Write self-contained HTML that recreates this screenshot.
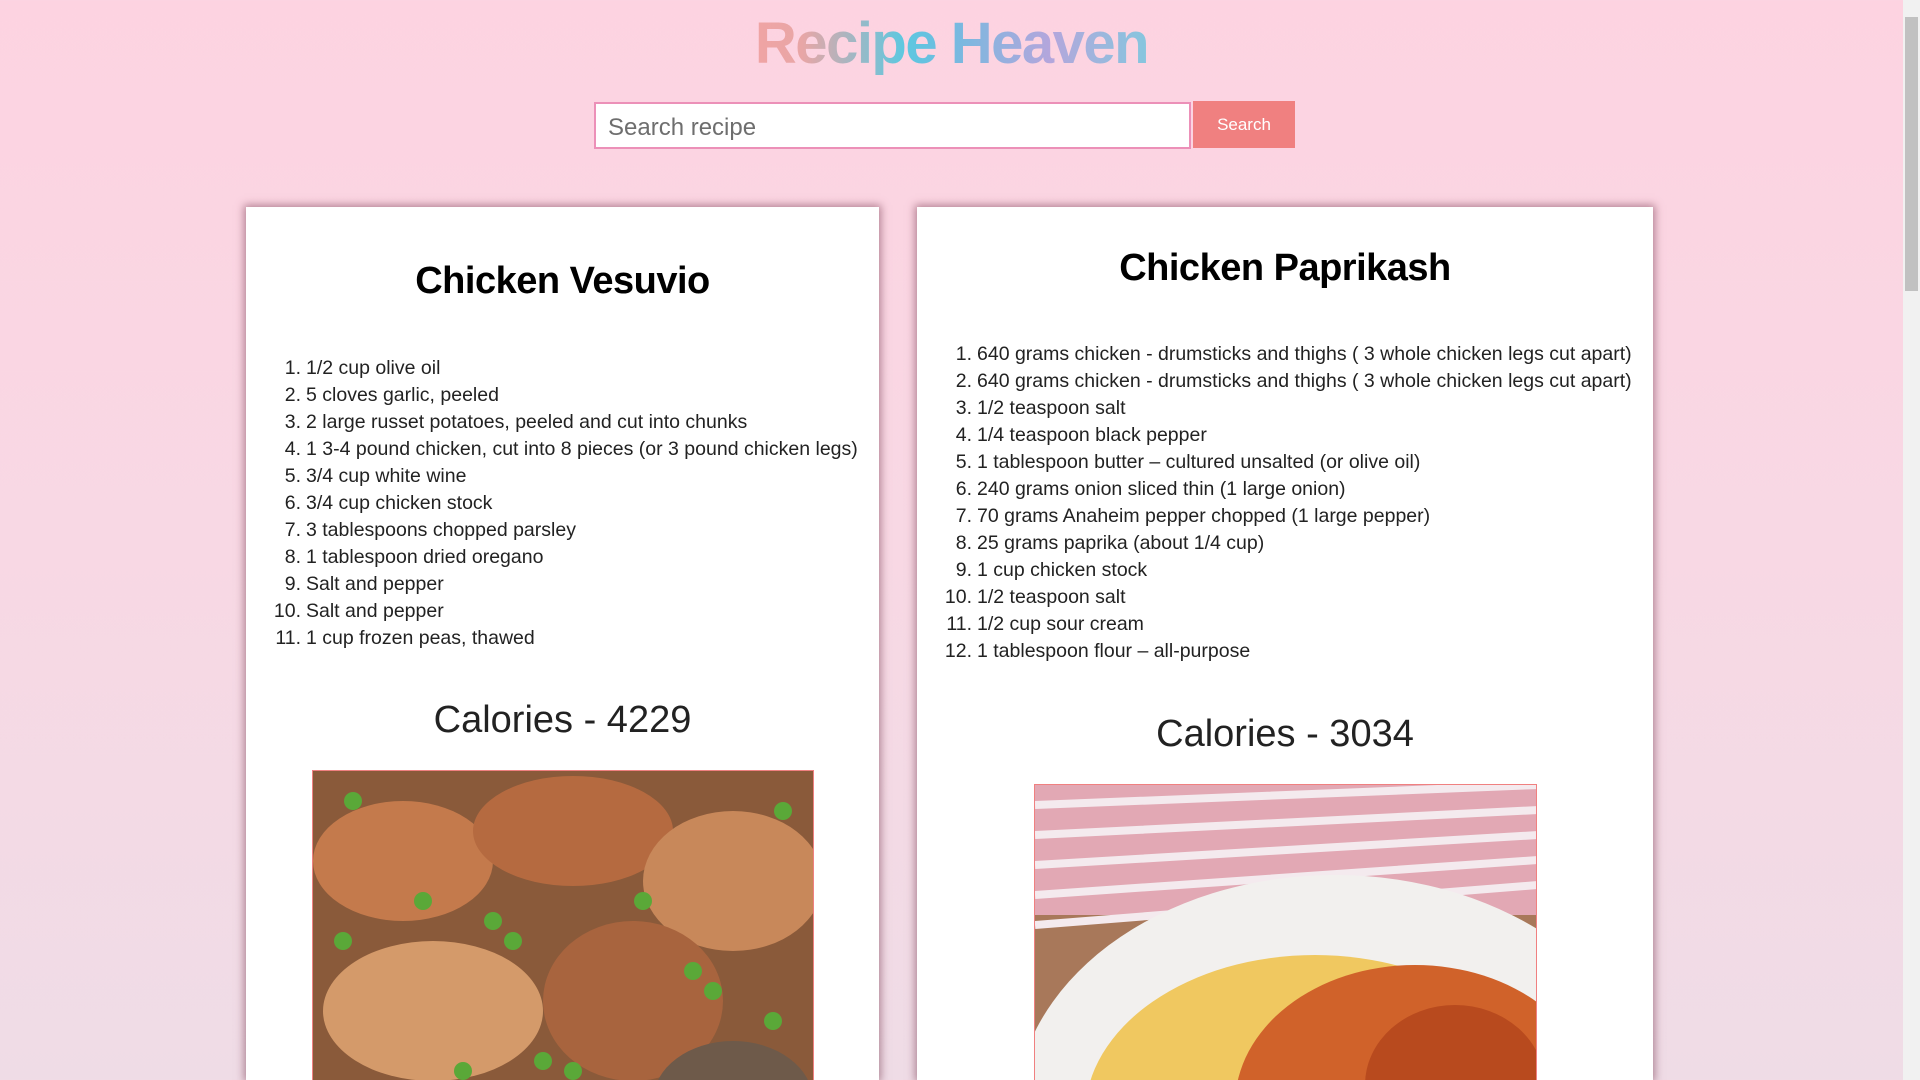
<!DOCTYPE html>
<html><head><meta charset="utf-8"><style>
*{margin:0;padding:0;box-sizing:border-box}
html,body{width:1920px;height:1080px;overflow:hidden}
body{background:linear-gradient(180deg,#fdd3e1 0%,#f8d8e4 50%,#efdce6 100%);font-family:"Liberation Sans",sans-serif;position:relative}
.title{position:absolute;left:0;width:1903px;top:10px;text-align:center;font-size:58px;font-weight:bold;letter-spacing:-1.5px}
.title span{background:linear-gradient(90deg,#f0a4a4 0%,#e8a6a6 12%,#5cc8e0 38%,#6fbce0 48%,#b4a6dc 75%,#86c6de 100%);-webkit-background-clip:text;background-clip:text;color:transparent}
.input{position:absolute;left:594px;top:102px;width:597px;height:47px;border:2px solid #ec90b8;background:#fff;font-size:24px;color:#6e6e6e;padding:10px 12px}
.btn{position:absolute;left:1193px;top:101px;width:102px;height:47px;background:#f08080;color:#fff;font-size:17px;text-align:center;line-height:47px}
.card{position:absolute;top:207px;height:873px;background:#fff;box-shadow:0 0 8px 2px rgba(120,60,80,.55)}
.card h2{position:absolute;left:0;right:0;text-align:center;font-size:38px;font-weight:bold;color:#000;letter-spacing:-0.5px}
.card ol{position:absolute;font-size:19.5px;line-height:27px;color:#222;padding-left:0;list-style:none}
.card ol li{position:relative;white-space:nowrap}
.card ol li b{position:absolute;font-weight:normal;right:100%;margin-right:5px}
.cal{position:absolute;left:0;right:0;text-align:center;font-size:38px;color:#222;font-weight:normal}
.img{position:absolute;border:1px solid #f08080;overflow:hidden}
.sb{position:absolute;left:1903px;top:0;width:17px;height:1080px;background:#f1f1f1}
.sb div{position:absolute;left:2px;top:17px;width:13px;height:274px;background:#c1c1c1}
</style></head><body>
<div class="title"><span>Recipe Heaven</span></div>
<div class="input">Search recipe</div>
<div class="btn">Search</div>

<div class="card" style="left:246px;width:633px">
<h2 style="top:53px">Chicken Vesuvio</h2>
<ol style="left:60px;top:148px">
<li><b>1.</b>1/2 cup olive oil</li>
<li><b>2.</b>5 cloves garlic, peeled</li>
<li><b>3.</b>2 large russet potatoes, peeled and cut into chunks</li>
<li><b>4.</b>1 3-4 pound chicken, cut into 8 pieces (or 3 pound chicken legs)</li>
<li><b>5.</b>3/4 cup white wine</li>
<li><b>6.</b>3/4 cup chicken stock</li>
<li><b>7.</b>3 tablespoons chopped parsley</li>
<li><b>8.</b>1 tablespoon dried oregano</li>
<li><b>9.</b>Salt and pepper</li>
<li><b>10.</b>Salt and pepper</li>
<li><b>11.</b>1 cup frozen peas, thawed</li>
</ol>
<div class="cal" style="top:492px">Calories - 4229</div>
<div class="img" style="left:66px;top:563px;width:502px;height:320px">
<svg width="502" height="320"><rect width="502" height="320" fill="#8a5a3a"/>
<ellipse cx="90" cy="90" rx="90" ry="60" fill="#c47a4c"/><ellipse cx="260" cy="60" rx="100" ry="55" fill="#b56a40"/><ellipse cx="420" cy="110" rx="90" ry="70" fill="#c8885a"/><ellipse cx="120" cy="240" rx="110" ry="70" fill="#d49a6a"/><ellipse cx="320" cy="230" rx="90" ry="80" fill="#a8643e"/><ellipse cx="420" cy="330" rx="80" ry="60" fill="#6e5a4a"/>
<g fill="#5aa838"><circle cx="40" cy="30" r="9"/><circle cx="180" cy="150" r="9"/><circle cx="200" cy="170" r="9"/><circle cx="230" cy="290" r="9"/><circle cx="260" cy="300" r="9"/><circle cx="380" cy="200" r="9"/><circle cx="400" cy="220" r="9"/><circle cx="470" cy="40" r="9"/><circle cx="30" cy="170" r="9"/><circle cx="150" cy="300" r="9"/><circle cx="330" cy="130" r="9"/><circle cx="460" cy="250" r="9"/><circle cx="110" cy="130" r="9"/></g></svg>
</div>
</div>

<div class="card" style="left:917px;width:736px">
<h2 style="top:40px">Chicken Paprikash</h2>
<ol style="left:60px;top:134px">
<li><b>1.</b>640 grams chicken - drumsticks and thighs ( 3 whole chicken legs cut apart)</li>
<li><b>2.</b>640 grams chicken - drumsticks and thighs ( 3 whole chicken legs cut apart)</li>
<li><b>3.</b>1/2 teaspoon salt</li>
<li><b>4.</b>1/4 teaspoon black pepper</li>
<li><b>5.</b>1 tablespoon butter – cultured unsalted (or olive oil)</li>
<li><b>6.</b>240 grams onion sliced thin (1 large onion)</li>
<li><b>7.</b>70 grams Anaheim pepper chopped (1 large pepper)</li>
<li><b>8.</b>25 grams paprika (about 1/4 cup)</li>
<li><b>9.</b>1 cup chicken stock</li>
<li><b>10.</b>1/2 teaspoon salt</li>
<li><b>11.</b>1/2 cup sour cream</li>
<li><b>12.</b>1 tablespoon flour – all-purpose</li>
</ol>
<div class="cal" style="top:506px">Calories - 3034</div>
<div class="img" style="left:117px;top:577px;width:503px;height:300px">
<svg width="503" height="300"><rect width="503" height="300" fill="#a8785a"/>
<rect width="503" height="130" fill="#e2a8b4"/>
<g stroke="#f4eaee" stroke-width="8"><path d="M0 20 L503 0M0 50 L503 25M0 80 L503 50M0 110 L503 75M0 140 L503 100"/></g>
<ellipse cx="300" cy="330" rx="320" ry="240" fill="#f2f0ee"/>
<ellipse cx="280" cy="330" rx="230" ry="160" fill="#f0c860"/>
<ellipse cx="380" cy="320" rx="180" ry="140" fill="#d0622a"/>
<ellipse cx="420" cy="300" rx="90" ry="80" fill="#b84a1e"/></svg>
</div>
</div>

<div class="sb"><div></div></div>
</body></html>
